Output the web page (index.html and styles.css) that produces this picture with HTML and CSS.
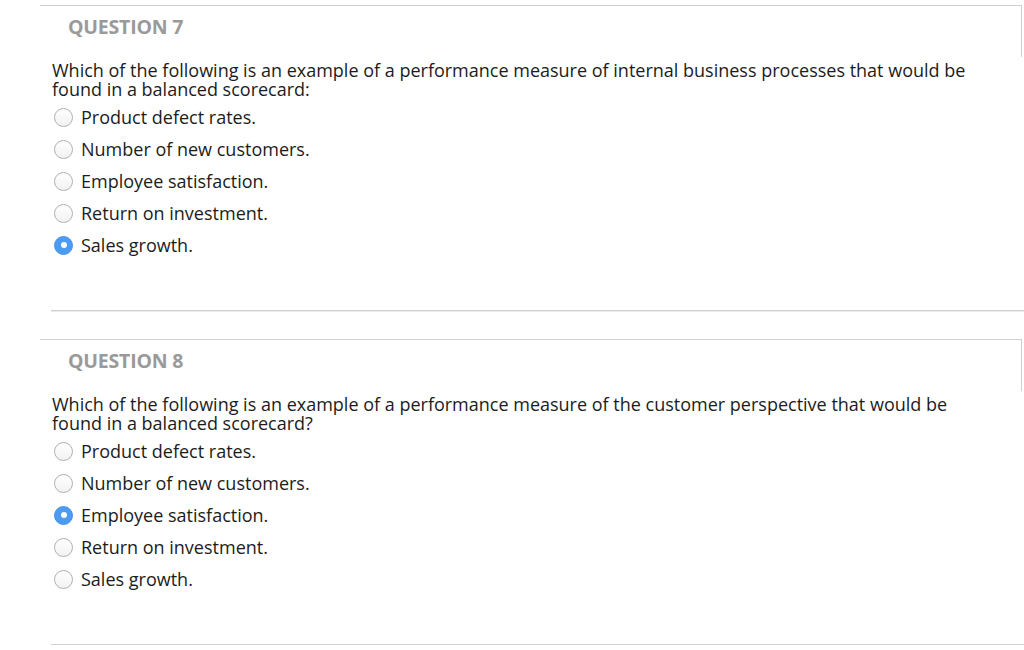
FILE: index.html
```html
<!DOCTYPE html>
<html>
<head>
<meta charset="utf-8">
<link rel="stylesheet" href="styles.css">
</head>
<body>
<div class="page">
  <div class="question">
    <div class="q-head"><h3 class="q-title">QUESTION 7</h3></div>
    <div class="q-body">
      <p class="q-text">Which of the following is an example of a performance measure of internal business processes that would be found in a balanced scorecard:</p>
      <ul class="options">
        <li class="option"><span class="radio"></span><span>Product defect rates.</span></li>
        <li class="option"><span class="radio"></span><span>Number of new customers.</span></li>
        <li class="option"><span class="radio"></span><span>Employee satisfaction.</span></li>
        <li class="option"><span class="radio"></span><span>Return on investment.</span></li>
        <li class="option"><span class="radio checked"></span><span>Sales growth.</span></li>
      </ul>
    </div>
  </div>
  <div class="question">
    <div class="q-head"><h3 class="q-title">QUESTION 8</h3></div>
    <div class="q-body">
      <p class="q-text">Which of the following is an example of a performance measure of the customer perspective that would be found in a balanced scorecard?</p>
      <ul class="options">
        <li class="option"><span class="radio"></span><span>Product defect rates.</span></li>
        <li class="option"><span class="radio"></span><span>Number of new customers.</span></li>
        <li class="option"><span class="radio checked"></span><span>Employee satisfaction.</span></li>
        <li class="option"><span class="radio"></span><span>Return on investment.</span></li>
        <li class="option"><span class="radio"></span><span>Sales growth.</span></li>
      </ul>
    </div>
  </div>
</div>
</body>
</html>
```
FILE: styles.css
```css
html, body {
  margin: 0;
  padding: 0;
  background: #fff;
}
body {
  font-family: "Open Sans", "Liberation Sans", sans-serif;
  color: #1c1c1c;
}
.page {
  padding: 5px 0 0 40px;
}
.question + .question {
  margin-top: 28px;
}
.q-head {
  box-sizing: border-box;
  height: 52px;
  margin-right: 2px;
  border-top: 1px solid #cfcfcf;
  border-right: 1px solid #cfcfcf;
  padding: 9px 0 0 28px;
}
.q-title {
  margin: 0;
  font-size: 19.5px;
  line-height: 24px;
  font-weight: 700;
  color: #9a9a9a;
  letter-spacing: -0.2px;
}
.q-body {
  margin-left: 11px;
  padding: 4px 0 49px 1px;
  border-bottom: 1px solid #cfcfcf;
  box-shadow: 0 1px 0 #ececec;
}
.q-text {
  margin: 0;
  font-size: 18px;
  line-height: 19px;
  max-width: 930px;
}
.options {
  list-style: none;
  margin: 2px 0 0;
  padding: 0;
}
.option {
  display: flex;
  align-items: center;
  height: 32px;
  font-size: 18px;
  gap: 8px;
}
.radio {
  box-sizing: border-box;
  width: 19px;
  height: 19px;
  margin-left: 2px;
  border-radius: 50%;
  border: 1px solid #b0b0b0;
  background: linear-gradient(#ffffff, #f2f2f2);
  flex: none;
  position: relative;
}
.radio.checked {
  border-color: #4592ee;
  background: #4c9bf3;
}
.radio.checked::after {
  content: "";
  position: absolute;
  left: 50%;
  top: 50%;
  width: 6px;
  height: 6px;
  margin: -3px 0 0 -3px;
  border-radius: 50%;
  background: #fff;
}
```
